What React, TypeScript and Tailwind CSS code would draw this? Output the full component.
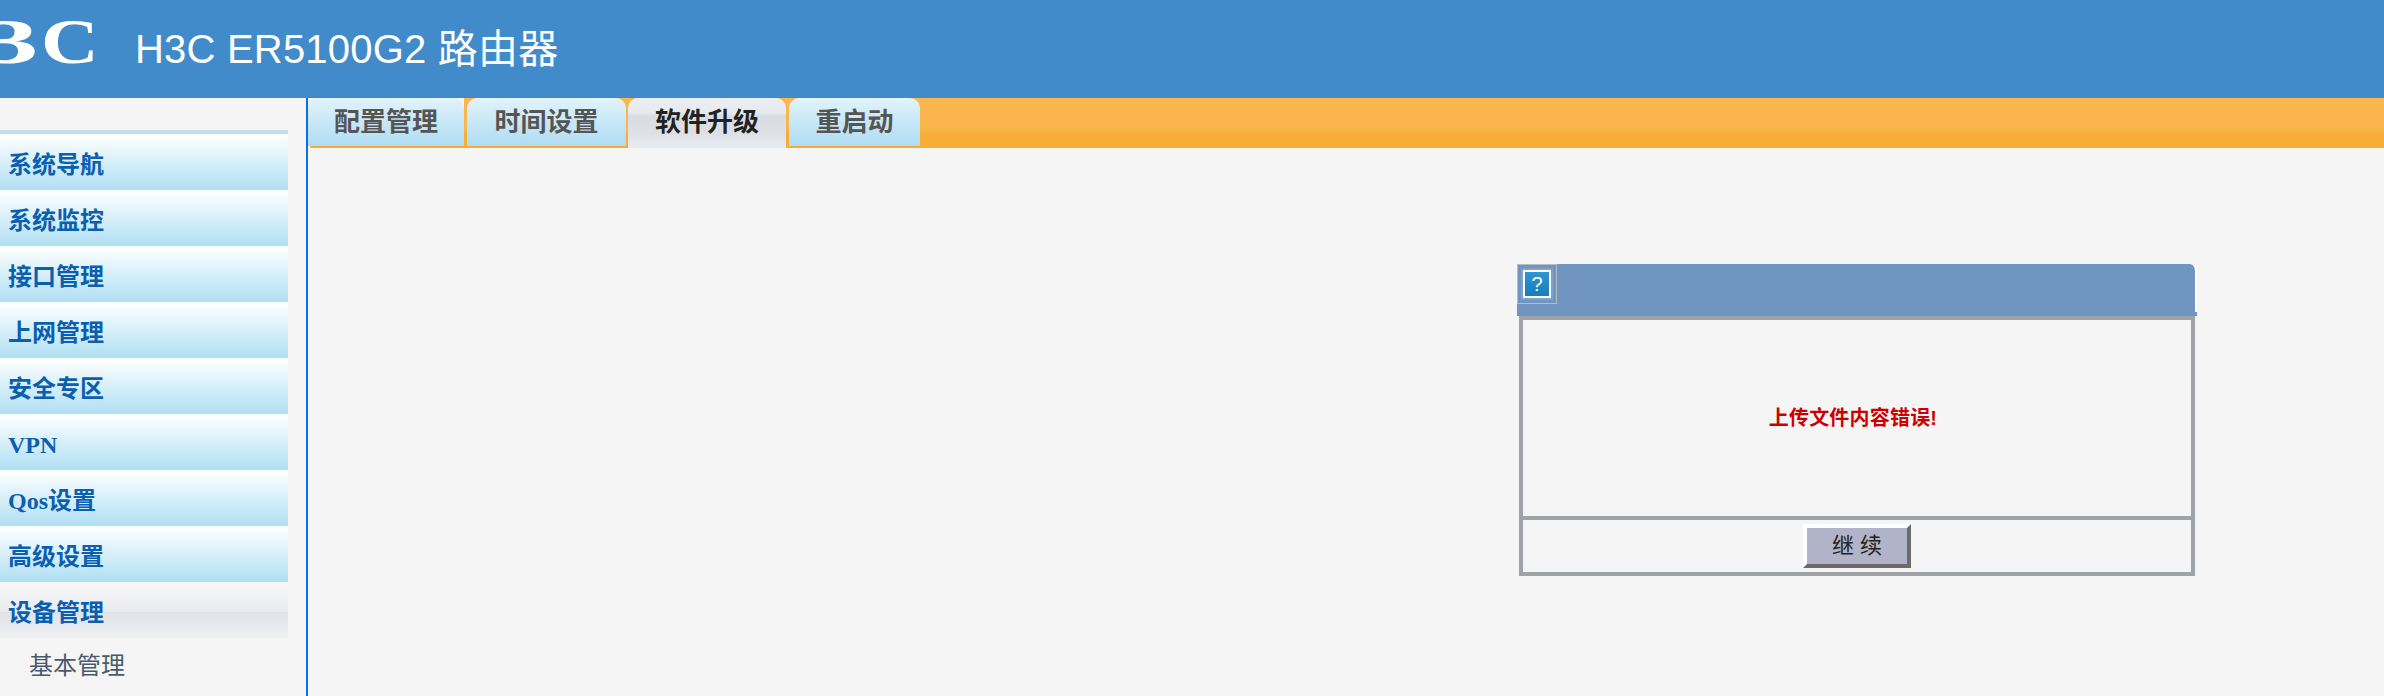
export default function App() {
  const items = ["系统导航", "系统监控", "接口管理", "上网管理", "安全专区", "VPN", "Qos设置", "高级设置"];
  const serif = "[font-family:'Liberation_Serif','Noto_Sans_CJK_SC',serif]";
  return (
    <div className="h-[696px] w-[2384px] overflow-hidden bg-[#f5f5f5] font-['Liberation_Sans','Noto_Sans_CJK_SC',sans-serif]">
      <header className="flex h-[98px] items-center bg-[#428bca]">
        <svg width="100" height="98" viewBox="0 0 100 98" className="block shrink-0 blur-[0.6px]">
          <g fill="#fff" fontFamily="'Liberation Serif', serif" fontWeight="700" fontSize="64">
            <text transform="translate(-19 63) scale(1.8 1)" x="0" y="0">3</text>
            <text transform="translate(41 63) scale(1.25 1)" x="0" y="0">C</text>
          </g>
        </svg>
        <h1 className="ml-[35px] text-[40px] leading-none font-normal tracking-[0.2px] text-white">H3C ER5100G2 路由器</h1>
      </header>
      <div className="flex h-[598px]">
        <aside className="w-[306px] shrink-0 pt-[32px]">
          <div className="w-[288px]">
            <div className="h-[4px] bg-[#c5dcee]" />
            {items.map((t) => (
              <div
                key={t}
                className={`flex h-[56px] items-center bg-gradient-to-b from-white to-[#aedff3] pl-[8px] pt-[5px] text-[24px] font-bold text-[#0b5fb0] ${serif}`}
              >
                {t}
              </div>
            ))}
            <div className={`flex h-[56px] items-center bg-[linear-gradient(to_bottom,#f6f7f9_0%,#e9ebee_53%,#dfe2e6_54%,#eff1f3_100%)] pl-[8px] pt-[5px] text-[24px] font-bold text-[#0b5fb0] ${serif}`}>
              设备管理
            </div>
            <div className={`flex h-[56px] items-center pl-[29px] text-[24px] text-[#4a5a6c] ${serif}`}>基本管理</div>
          </div>
        </aside>
        <div className="w-[2px] shrink-0 bg-[#0a6cf0]" />
        <main className="min-w-0 flex-1">
          <nav className="flex h-[50px] bg-[linear-gradient(to_bottom,#f9b74f_0%,#f9b54b_60%,#f8ad36_75%,#f8ad36_100%)]">
            <div className="h-[50px] w-[156px] bg-[#f5f5f5]">
              <div className="flex h-[48px] items-center justify-center rounded-tl-[8px] rounded-tr-[10px] bg-gradient-to-b from-[#e2f3fb] to-[#aedcf2] text-[26px] font-bold text-[#555]">
                配置管理
              </div>
              <div className="ml-[2px] h-[2px] rounded-l-[2px] bg-[#f8ad36]" />
            </div>
            <div className="ml-[3px] flex h-[48px] w-[159px] items-center justify-center rounded-t-[10px] bg-gradient-to-b from-[#e2f3fb] to-[#aedcf2] text-[26px] font-bold text-[#555]">
              时间设置
            </div>
            <div className="ml-[2px] flex h-[50px] w-[158px] items-center justify-center rounded-t-[10px] bg-[linear-gradient(to_bottom,#ebeff2_0%,#e6e9ed_30%,#d9dde3_36%,#dde1e6_70%,#e8ebee_100%)] pb-[2px] text-[26px] font-bold text-[#222]">
              软件升级
            </div>
            <div className="ml-[3px] flex h-[48px] w-[131px] items-center justify-center rounded-t-[10px] bg-gradient-to-b from-[#e2f3fb] to-[#aedcf2] text-[26px] font-bold text-[#555]">
              重启动
            </div>
          </nav>
          <div className="pl-[1209px] pt-[116px]">
            <div className="w-[680px]">
              <div className="relative h-[52px] rounded-tr-[7px] border-r-2 border-r-white bg-[#6f95c0]">
                <div className="absolute left-0 top-0 flex h-[40px] w-[40px] items-center justify-center border border-[#b5bcc4]">
                  <div className="flex h-[32px] w-[32px] items-center justify-center bg-[#7fa2ca]">
                    <div className="flex h-[28px] w-[28px] items-center justify-center border-[2px] border-white bg-gradient-to-b from-[#2c97d3] to-[#1a7cbd] text-[20px] font-normal leading-none text-white">
                      ?
                    </div>
                  </div>
                </div>
                <div className="absolute -right-[2px] bottom-0 h-[4px] w-[4px] bg-[#6f95c0]" />
              </div>
              <div className="ml-[2px] w-[676px] border-4 border-[#a0a3a5]">
                <div className="flex h-[196px] items-center justify-center pr-[8px] text-[20px] font-bold tracking-[0.2px] text-[#cc0000]">
                  上传文件内容错误!
                </div>
                <div className="flex h-[56px] items-center justify-center border-t-4 border-[#a0a3a5]">
                  <button className="h-[44px] w-[108px] border-4 border-t-white border-l-white border-r-[#6b6b6b] border-b-[#6b6b6b] bg-[#b1b4c8] text-[22px] leading-none text-[#222]">
                    继 续
                  </button>
                </div>
              </div>
            </div>
          </div>
        </main>
      </div>
    </div>
  );
}
